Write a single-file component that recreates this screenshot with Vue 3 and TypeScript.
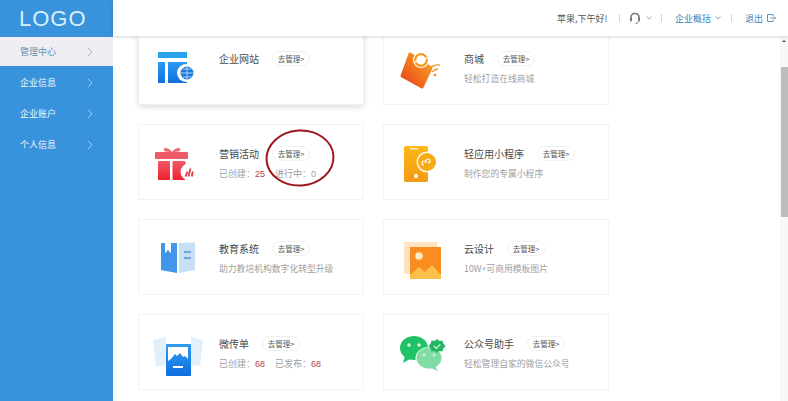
<script setup lang="ts">
interface Stat { label: string; value: string }
interface Card {
  icon: string
  title: string
  desc?: string
  stats?: Stat[]
  first?: boolean
  mark?: boolean
}
const menu = ['管理中心', '企业信息', '企业账户', '个人信息']
const cards: Card[] = [
  { icon: 'site', title: '企业网站', first: true },
  { icon: 'shop', title: '商城', desc: '轻松打造在线商城' },
  { icon: 'gift', title: '营销活动', stats: [{ label: '已创建\uFF1A', value: '25' }, { label: '进行中\uFF1A', value: '0' }], mark: true },
  { icon: 'mini', title: '轻应用小程序', desc: '制作您的专属小程序' },
  { icon: 'edu', title: '教育系统', desc: '助力教培机构数字化转型升级' },
  { icon: 'design', title: '云设计', desc: '10W+可商用模板图片' },
  { icon: 'leaflet', title: '微传单', stats: [{ label: '已创建\uFF1A', value: '68' }, { label: '已发布\uFF1A', value: '68' }] },
  { icon: 'wechat', title: '公众号助手', desc: '轻松管理自家的微信公众号' }
]
</script>

<template>
  <div class="app">
    <aside class="side">
      <div class="logo">LOGO</div>
      <nav class="menu">
        <div v-for="(m, i) in menu" :key="m" class="item" :class="{ active: i === 0 }">
          <span>{{ m }}</span>
          <svg width="6" height="10" viewBox="0 0 6 10" fill="none"><path d="M1 1l4 4-4 4" stroke="currentColor" stroke-width="1" /></svg>
        </div>
      </nav>
    </aside>
    <div class="right">
      <header class="top">
        <span class="hello">苹果,下午好!</span>
        <i class="sep"></i>
        <svg class="headset" width="12" height="13" viewBox="0 0 12 13" fill="none">
          <path d="M2 8V5.500a4 4 0 0 1 8 0V8" stroke="#777" stroke-width="1.600" />
          <rect x="1" y="5.500" width="2" height="4" rx="1" fill="#777" />
          <rect x="9" y="5.500" width="2" height="4" rx="1" fill="#777" />
          <path d="M9.500 9.500Q9 11.500 6.500 11.500" stroke="#777" />
        </svg>
        <svg class="caret" width="6" height="4" viewBox="0 0 6 4" fill="none"><path d="M.5.5L3 3 5.500.5" stroke="#9ab" /></svg>
        <i class="sep sep2"></i>
        <span class="link">企业概括</span>
        <svg class="caret near" width="6" height="4" viewBox="0 0 6 4" fill="none"><path d="M.5.5L3 3 5.500.5" stroke="#9ab" /></svg>
        <i class="sep sep3"></i>
        <span class="link">退出</span>
        <svg class="exit" width="9" height="8" viewBox="0 0 9 8" fill="none">
          <path d="M6 2V.5H.5v7H6V6" stroke="#6a93b5" /><path d="M3.500 4H8.500M7 2.500L8.500 4 7 5.500" stroke="#6a93b5" />
        </svg>
      </header>
      <div class="body">
        <main class="content">
          <div class="grid">
            <section v-for="c in cards" :key="c.title" class="card" :class="{ first: c.first }">
              <svg class="icon" width="60" height="52" viewBox="0 0 60 52">
                <defs>
                  <linearGradient id="gBlue" x1="0" y1="0" x2="0" y2="1"><stop offset="0" stop-color="#2f9bf0" /><stop offset="1" stop-color="#0f6fe0" /></linearGradient>
                  <linearGradient id="gRed" x1="0" y1="0" x2="0" y2="1"><stop offset="0" stop-color="#ee5a66" /><stop offset="1" stop-color="#f3202f" /></linearGradient>
                  <linearGradient id="gOrange" x1="1" y1="0" x2="0" y2="1"><stop offset="0" stop-color="#fbab1f" /><stop offset="1" stop-color="#e7401c" /></linearGradient>
                  <linearGradient id="gGold" x1="0" y1="0" x2="0" y2="1"><stop offset="0" stop-color="#fdb714" /><stop offset="1" stop-color="#f49a16" /></linearGradient>
                </defs>
                <g v-if="c.icon === 'site'">
                  <rect x="10" y="9" width="29" height="6" fill="#27a3ea" />
                  <rect x="10" y="19" width="7" height="21" fill="url(#gBlue)" />
                  <rect x="20" y="19" width="19" height="21" fill="url(#gBlue)" />
                  <circle cx="38" cy="30" r="9" fill="#fff" />
                  <circle cx="39" cy="30" r="6.500" fill="#1a78dd" />
                  <path d="M32.500 30h13M39 23.500v13M34.500 26h9M34.500 34h9" stroke="#cfe6fb" stroke-width=".8" />
                </g>
                <g v-else-if="c.icon === 'gift'">
                  <path d="M24 14c-3-4-7-5-8-3s1 3 8 3zM24 14c3-4 7-5 8-3s-1 3-8 3z" fill="#ee6470" />
                  <rect x="7" y="14" width="33" height="7" rx="1" fill="#ec5a66" />
                  <rect x="10" y="23" width="12" height="19" rx="1" fill="url(#gRed)" />
                  <rect x="24.500" y="23" width="13" height="19" rx="1" fill="url(#gRed)" />
                  <circle cx="41" cy="34" r="8.500" fill="#fff" />
                  <path d="M37.500 38.500l2-5M40.500 38.500l2-8M43.800 38.500l1-5" stroke="#e23a45" stroke-width="1.800" />
                </g>
                <g v-else-if="c.icon === 'shop'">
                  <path d="M17 11L38 25 29 44 9 33z" fill="url(#gOrange)" stroke="url(#gOrange)" stroke-width="3" stroke-linejoin="round" />
                  <circle cx="28" cy="17" r="8" fill="#fff" />
                  <circle cx="28" cy="17" r="5.800" fill="none" stroke="#f59a1d" stroke-width="2.200" />
                  <path d="M22 19l12-4" stroke="#fff" stroke-width="1.500" />
                  <path d="M36 26q5-5 11-4M39 29q3-3 6-3" fill="none" stroke="#ee9a2a" stroke-width="1.300" />
                  <circle cx="42" cy="32" r="1.300" fill="#ee7a2a" />
                </g>
                <g v-else-if="c.icon === 'mini'">
                  <rect x="11" y="8" width="24" height="36" rx="2" fill="url(#gGold)" />
                  <circle cx="23" cy="38" r="2" fill="#fff" />
                  <rect x="17" y="10" width="8" height="1.500" fill="#fff" opacity=".7" />
                  <circle cx="34" cy="24" r="10.500" fill="#fff" opacity=".9" />
                  <circle cx="34" cy="24" r="9" fill="#f6ab14" />
                  <path d="M31 27a2 2 0 1 1 2-2v-2a2 2 0 1 1 2 2" fill="none" stroke="#fff" stroke-width="1.200" />
                </g>
                <g v-else-if="c.icon === 'edu'">
                  <path d="M13 11a1 1 0 0 1 1-1h3v10l3-3 3 3V10h6v30l-14-2.500a1.500 1.500 0 0 1-2-1.500z" fill="#4296ea" />
                  <path d="M31 40V10l16-.5V37z" fill="#c7dff6" />
                  <path d="M36 19h7M36 25h7" stroke="#5d92c7" stroke-width="1.500" />
                </g>
                <g v-else-if="c.icon === 'design'">
                  <rect x="11" y="9" width="33" height="32" fill="#fde3bf" />
                  <rect x="17" y="14" width="31" height="32" fill="#fb8c1f" />
                  <circle cx="26" cy="23" r="3.800" fill="#fde9c4" />
                  <path d="M17 46v-4l9-8 6 5 7-7 9 10v4z" fill="#fbc04a" />
                </g>
                <g v-else-if="c.icon === 'leaflet'">
                  <path d="M5 12l13-3v28l-10 2zM43 9l12 3-3 26-9-1z" fill="#e2f0fb" />
                  <rect x="18" y="16" width="25" height="32" rx="1" fill="url(#gBlue)" />
                  <path d="M20 19h20v12l-3-3-2 1-3-4-3 3-2-2-4 5-3 2z" fill="#fff" />
                  <rect x="25" y="38" width="10" height="2" fill="#fff" />
                </g>
                <g v-else>
                  <ellipse cx="21" cy="20" rx="14" ry="12" fill="#1fc265" />
                  <path d="M12 28l-2 7 7-4z" fill="#1fc265" />
                  <circle cx="16" cy="17" r="1.700" fill="#dff8e8" />
                  <circle cx="26" cy="17" r="1.700" fill="#dff8e8" />
                  <ellipse cx="36" cy="30" rx="13.500" ry="11" fill="#fff" />
                  <ellipse cx="36" cy="30" rx="12.500" ry="10.500" fill="#7fdca3" />
                  <path d="M42 38l3 5-7-3z" fill="#7fdca3" />
                  <circle cx="31" cy="27" r="1.500" fill="#c9f2d8" />
                  <circle cx="41" cy="27" r="1.500" fill="#c9f2d8" />
                  <path d="M44 11l2.500 2 3-.5.800 3 2.200 2.500-2.200 2.500-.8 3-3-.5-2.500 2-2.500-2-3 .5-.8-3-2.200-2.500 2.200-2.500.8-3 3 .5z" fill="#23b765" />
                  <path d="M41 18l2.300 2.300 4-4" fill="none" stroke="#dff8e8" stroke-width="1.200" />
                </g>
              </svg>
              <div class="info">
                <div class="head">
                  <h3>{{ c.title }}</h3>
                  <span class="pill">去管理&gt;</span>
                </div>
                <p v-if="c.desc" class="desc">{{ c.desc }}</p>
                <p v-else-if="c.stats" class="desc stats">
                  <span v-for="s in c.stats" :key="s.label">{{ s.label }}<b :class="{ zero: s.value === '0' }">{{ s.value }}</b></span>
                </p>
              </div>
              <svg v-if="c.mark" class="ring" width="72" height="60" viewBox="0 0 72 60" fill="none">
                <ellipse cx="36" cy="30" rx="33.500" ry="27.500" stroke="#9e161e" stroke-width="2" transform="rotate(-4 36 30)" />
              </svg>
            </section>
          </div>
        </main>
        <div class="bar">
          <i class="arrow"></i>
          <i class="thumb"></i>
        </div>
      </div>
    </div>
  </div>
</template>

<style scoped>
.app {
  display: flex;
  width: 788px;
  height: 401px;
  overflow: hidden;
  background: #fff;
  font-family: "Noto Sans CJK SC", "Liberation Sans", sans-serif;
  color: #555;
}
.side {
  width: 113px;
  flex: none;
  background: #3892dc;
  color: #fff;
}
.logo {
  height: 37px;
  padding: 2px 0 0 19px;
  box-sizing: border-box;
  font: 400 22px/33px "Liberation Sans", sans-serif;
  letter-spacing: 1px;
  color: #d6f0fb;
}
.item {
  display: flex;
  align-items: center;
  height: 31px;
  padding-left: 20px;
  font-size: 9px;
  gap: 31px;
  color: #eef7fd;
}
.item svg { color: #9fd0f2; }
.item.active {
  height: 29px;
  margin-bottom: 1px;
  background: #efeff3;
  color: #5f8fb0;
}
.item.active svg { color: #aab4bc; }
.right {
  flex: 1;
  min-width: 0;
  display: flex;
  flex-direction: column;
}
.top {
  height: 36px;
  flex: none;
  display: flex;
  align-items: center;
  padding-left: 444px;
  font-size: 9px;
  box-shadow: 0 1px 3px rgba(0, 0, 0, .16);
  position: relative;
  z-index: 2;
  background: #fff;
}
.hello { width: 50px; white-space: nowrap; color: #555; }
.sep { width: 1px; height: 8px; background: #d5d5d5; margin: 0 9px 0 12px; }
.sep2 { margin: 0 13px 0 9px; }
.sep3 { margin: 0 13px 0 10px; }
.link { color: #3d83b8; white-space: nowrap; }
.caret { margin-left: 5px; }
.caret.near { margin-left: 4px; }
.exit { margin-left: 4px; }
.body {
  flex: 1;
  min-height: 0;
  display: flex;
}
.content {
  flex: 1;
  min-width: 0;
  overflow: hidden;
  padding-left: 25px;
}
.grid {
  display: grid;
  grid-template-columns: 226px 226px;
  grid-auto-rows: 76px;
  gap: 19px;
  margin-top: -7px;
}
.card {
  position: relative;
  display: flex;
  box-sizing: border-box;
  padding: 14px 0 0 10px;
  border: 1px solid #f3f3f3;
  background: #fff;
}
.card.first {
  border-color: #f0f0f0;
  box-shadow: 0 2px 6px rgba(0, 0, 0, .13);
}
.icon { flex: none; margin: -1px 0 0 -1px; }
.info { margin-left: 11px; padding-top: 6px; }
.head { display: flex; align-items: center; gap: 13px; height: 16px; }
h3 {
  margin: 0;
  font-size: 10px;
  font-weight: 400;
  color: #4a4a4a;
  white-space: nowrap;
}
.pill {
  box-sizing: border-box;
  width: 38px;
  height: 15px;
  margin-top: 1px;
  border: 1px solid #f0f0f0;
  border-radius: 8px;
  font-size: 7.500px;
  line-height: 13px;
  text-align: center;
  color: #555;
  white-space: nowrap;
}
.desc {
  margin: 6px 0 0;
  font-size: 8.800px;
  line-height: 14px;
  color: #a0a0a0;
  white-space: nowrap;
}
.stats { display: flex; gap: 10px; font-size: 9px; }
.stats b { font-weight: 400; color: #b5434b; font-family: "Liberation Sans", sans-serif; }
.stats b.zero { color: #a0a0a0; }
.ring { position: absolute; left: 125px; top: 3px; }
.bar {
  width: 8px;
  flex: none;
  background: #f7f7f7;
  display: flex;
  flex-direction: column;
  align-items: center;
}
.arrow {
  margin-top: 4px;
  border: 2px solid transparent;
  border-top: 0;
  border-bottom: 2px solid #555;
}
.thumb {
  margin-top: 25px;
  width: 7px;
  height: 150px;
  background: #bdbdbd;
}
</style>
<style>
html, body { margin: 0; background: #fff; overflow: hidden; }
</style>
